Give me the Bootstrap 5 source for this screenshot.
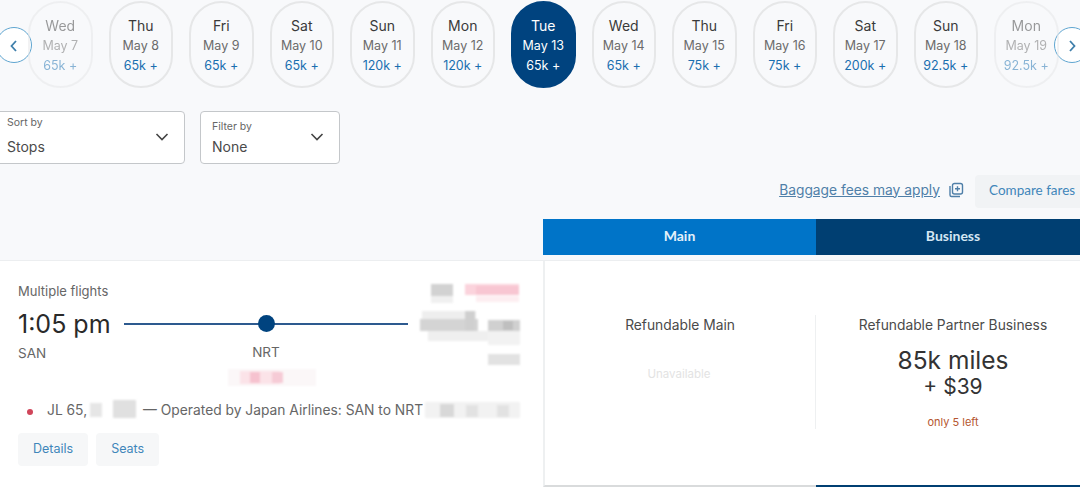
<!DOCTYPE html>
<html lang="en">
<head>
    <meta charset="UTF-8">
    <meta name="viewport" content="width=device-width, initial-scale=1.0">
    <title>Flight results</title>
    <link href="https://cdn.jsdelivr.net/npm/bootstrap@5.3.3/dist/css/bootstrap.min.css" rel="stylesheet">
    <style>
        html, body { height: 487px; overflow: hidden; }
        body {
            background-color: #f8f9fb;
            color: #2e2e2e;
            font-family: "Inter", "Liberation Sans", sans-serif;
            font-size: 13px;
            width: 1080px;
        }

        /* Date strip */
        .date-strip { height: 89px; padding: 1px 0 0 28px; gap: 16px; position: relative; }
        .date-pill {
            flex: 0 0 64.5px;
            height: 87px;
            border: 2px solid #e6e7e8;
            border-radius: 33px;
            text-align: center;
            padding-top: 13px;
            color: #6b6b6b;
            line-height: 19.5px;
            font-size: 12.5px;
            white-space: nowrap;
        }
        .date-pill b { display: block; font-weight: 400; font-size: 14px; color: #3a3a3a; }
        .date-pill i { display: block; font-style: normal; color: #1a6fb0; margin-top: 1px; }
        .date-pill.is-faded { opacity: .5; }
        .date-pill.is-active { background-color: #00437f; border-color: #00437f; color: #fff; }
        .date-pill.is-active b, .date-pill.is-active i { color: #fff; }
        .date-arrow {
            position: absolute;
            top: 27px;
            width: 36px;
            height: 36px;
            border: 1.5px solid #5fa5d0;
            border-radius: 50%;
            background-color: #fff;
        }
        .date-arrow.is-prev { left: -4px; }
        .date-arrow.is-next { left: 1054px; }

        /* Sort and filter */
        .picker-row { margin: 22px 0 0 -5px; gap: 15px; }
        .picker {
            height: 53px;
            background-color: #fff;
            border: 1px solid #c4c7ca;
            border-radius: 4px;
            position: relative;
            padding-left: 11px;
            color: #4a4a4a;
        }
        .picker.is-sort { width: 190px; padding-top: 4px; }
        .picker.is-filter { width: 140px; padding-top: 8px; }
        .picker-label { font-size: 10.5px; line-height: 14px; color: #666; }
        .picker-value { font-size: 14px; line-height: 20px; }
        .picker.is-sort .picker-value { margin-top: 7px; }
        .picker.is-filter .picker-value { margin-top: 3px; }
        .picker svg { position: absolute; top: 20px; right: 15px; }

        /* Link row */
        .link-row { margin-top: 11px; height: 33px; }
        .bag-link { color: #4f7fa8; text-decoration: underline; font-size: 13.8px; margin-bottom: 3px; }
        .bag-icon { margin-bottom: 4px; }
        .compare-btn {
            background-color: #f1f3f5;
            color: #3f86ba;
            height: 33px;
            width: 115px;
            margin-left: 11px;
            border-radius: 4px;
            padding: 0 0 3px 14px;
            font-size: 13.5px;
            font-family: "Lato", sans-serif;
            text-align: left;
            border: 0;
            margin-right: -10px;
        }

        /* Fare tabs */
        .fare-tabs { margin: 11px 0 0 543px; height: 36px; font-family: "Lato", sans-serif; font-weight: 700; font-size: 14px; color: #d4e6f3; }
        .fare-tabs > div { line-height: 34px; text-align: center; flex: none; }
        .tab-main { width: 273px; background-color: #0074c8; color: #e4f1fa; }
        .tab-business { width: 274px; background-color: #003f72; }

        /* Result */
        .result-row { margin-top: 5px; height: 227px; background-color: #fff; border-top: 1px solid #eceef0; }
        .flight-info { flex: none; width: 543px; padding: 21px 18px 0; position: relative; }
        .fare-area { flex: none; width: 547px; border-left: 2px solid #eef0f1; border-bottom: 2px solid #d9dbdc; padding-top: 54px; position: relative; }
        .fare-area::after { content: ""; position: absolute; left: 271px; right: 0; bottom: -2px; height: 2px; background-color: #003f72; }
        .muted-text { color: #666; line-height: 18px; }
        .time-row { margin-top: 9px; }
        .flight-time { font-size: 25px; line-height: 30px; color: #2a2a2a; width: 106px; flex: none; }
        .route-line { width: 284px; height: 2px; background-color: #2d5a8f; position: relative; }
        .route-line span { position: absolute; left: 134px; top: -8px; width: 17px; height: 17px; background-color: #00437f; border-radius: 50%; }
        .code-row { font-size: 13.5px; color: #666; margin-top: 4px; line-height: 20px; position: relative; }
        .code-row span:last-child { position: absolute; left: 234px; width: 28px; text-align: center; top: -1px; }
        .blur-layer { position: absolute; left: 0; top: 0; }
        .operator-row { position: absolute; left: 47px; top: 140px; font-size: 13.8px; color: #666; line-height: 18px; white-space: nowrap; }
        .flight-gap { display: inline-block; width: 56px; }
        .airline-dot { position: absolute; left: 27px; top: 148px; width: 6px; height: 6px; border-radius: 50%; background-color: #d0455a; }
        .action-row { position: absolute; left: 18px; top: 172px; gap: 8px; }
        .action-btn {
            background-color: #f6f7f8;
            color: #3f86ba;
            height: 33px;
            border: 0;
            border-radius: 4px;
            font-size: 12.5px;
            padding: 0 15px;
        }
        .fare-col { text-align: center; height: 114px; }
        .fare-col.is-left { width: 271px; border-right: 1px solid #eef0f1; }
        .fare-col.is-right { width: 274px; }
        .fare-name { font-size: 13.8px; line-height: 20px; color: #4a4a4a; }
        .fare-none { font-size: 11.5px; color: #e3e3e3; margin-top: 31px; padding-right: 2px; }
        .fare-miles { font-size: 24.5px; line-height: 28px; margin-top: 11px; color: #333; }
        .fare-cash { font-size: 21px; line-height: 24px; margin-top: 1px; color: #333; }
        .fare-left { font-size: 11px; color: #b5562f; margin-top: 15px; }
    </style>
</head>
<body>
    <div class="date-strip d-flex" id="dates">
        <button class="date-arrow is-prev p-0" aria-label="Previous">
            <svg width="12" height="14" viewBox="0 0 12 14"><path d="M8 2 3.5 7 8 12" fill="none" stroke="#3f7fab" stroke-width="1.8"/></svg>
        </button>
        <button class="date-arrow is-next p-0" aria-label="Next">
            <svg width="12" height="14" viewBox="0 0 12 14"><path d="M4 2l4.5 5L4 12" fill="none" stroke="#3f7fab" stroke-width="1.8"/></svg>
        </button>
    </div>

    <div class="picker-row d-flex">
        <div class="picker is-sort">
            <div class="picker-label">Sort by</div>
            <div class="picker-value">Stops</div>
            <svg width="14" height="10" viewBox="0 0 14 10"><path d="M1.500 2 7 7.500 12.500 2" fill="none" stroke="#444" stroke-width="1.6"/></svg>
        </div>
        <div class="picker is-filter">
            <div class="picker-label">Filter by</div>
            <div class="picker-value">None</div>
            <svg width="14" height="10" viewBox="0 0 14 10"><path d="M1.500 2 7 7.500 12.500 2" fill="none" stroke="#444" stroke-width="1.6"/></svg>
        </div>
    </div>

    <div class="link-row d-flex justify-content-end align-items-center">
        <a class="bag-link" href="#">Baggage fees may apply</a>
        <svg class="bag-icon ms-2" width="16" height="16" viewBox="0 0 16 16" fill="none" stroke="#4f7fa8" stroke-width="1.4">
            <path d="M2 4v9a1.500 1.500 0 0 0 1.500 1.500H12"/>
            <rect x="4.500" y="1.500" width="10" height="10.500" rx="2"/>
            <path d="M9.500 4.200v5M7 6.700h5"/>
        </svg>
        <button class="compare-btn">Compare fares</button>
    </div>

    <div class="fare-tabs d-flex">
        <div class="tab-main">Main</div>
        <div class="tab-business">Business</div>
    </div>

    <div class="result-row d-flex">
        <div class="flight-info">
            <div class="muted-text">Multiple flights</div>
            <div class="time-row d-flex align-items-center">
                <div class="flight-time">1:05 pm</div>
                <div class="route-line"><span></span></div>
            </div>
            <div class="code-row"><span>SAN</span><span>NRT</span></div>

            <span class="airline-dot"></span>
            <div class="operator-row">JL 65,<span class="flight-gap"></span>— Operated by Japan Airlines: SAN to NRT</div>

            <!-- blurred-out parts of the screenshot -->
            <svg class="blur-layer" width="543" height="170" viewBox="0 0 543 170">
                <defs><filter id="soft"><feGaussianBlur stdDeviation="1.2"/></filter></defs>
                <g filter="url(#soft)">
                    <rect x="431" y="23" width="22" height="12" fill="#d2d2d2"/>
                    <rect x="431" y="35" width="22" height="7" fill="#f0f0f0"/>
                    <rect x="465" y="23" width="54" height="11" fill="#fbd3dc"/>
                    <rect x="476" y="25" width="43" height="9" fill="#f8c6d2"/>
                    <rect x="476" y="35" width="43" height="6" fill="#fdeef1"/>
                    <rect x="422" y="50" width="54" height="10" fill="#eeeeee"/>
                    <rect x="420" y="58" width="58" height="12" fill="#d4d4d4"/>
                    <rect x="428" y="70" width="72" height="10" fill="#efefef"/>
                    <rect x="465" y="50" width="10" height="20" fill="#cfcfcf"/>
                    <rect x="488" y="59" width="32" height="11" fill="#d0d0d0"/>
                    <rect x="503" y="60" width="10" height="9" fill="#bfbfbf"/>
                    <rect x="488" y="70" width="32" height="14" fill="#f2f2f2"/>
                    <rect x="488" y="93" width="32" height="11" fill="#e2e2e2"/>
                    <rect x="228" y="108" width="88" height="17" fill="#fbf7f8"/>
                    <rect x="240" y="110" width="40" height="13" fill="#fbe3e8"/>
                    <rect x="250" y="111" width="10" height="11" fill="#f6c2cf"/>
                    <rect x="272" y="111" width="11" height="11" fill="#f6cbd6"/>
                    <rect x="90" y="142" width="12" height="14" fill="#e6e6e6"/>
                    <rect x="113" y="139" width="23" height="18" fill="#e0e0e0"/>
                    <rect x="425" y="141" width="95" height="16" fill="#f2f2f2"/>
                    <rect x="440" y="143" width="14" height="13" fill="#d8d8d8"/>
                    <rect x="466" y="144" width="12" height="12" fill="#e2e2e2"/>
                    <rect x="497" y="144" width="12" height="12" fill="#e2e2e2"/>
                </g>
            </svg>

            <div class="action-row d-flex">
                <button class="action-btn">Details</button>
                <button class="action-btn">Seats</button>
            </div>
        </div>
        <div class="fare-area d-flex">
            <div class="fare-col is-left">
                <div class="fare-name">Refundable Main</div>
                <div class="fare-none">Unavailable</div>
            </div>
            <div class="fare-col is-right">
                <div class="fare-name">Refundable Partner Business</div>
                <div class="fare-miles">85k miles</div>
                <div class="fare-cash">+ $39</div>
                <div class="fare-left">only 5 left</div>
            </div>
        </div>
    </div>

    <script src="https://cdn.jsdelivr.net/npm/bootstrap@5.3.3/dist/js/bootstrap.bundle.min.js"></script>
    <script>
        var dias = [
            ['Wed', 'May 7', '65k +', 'is-faded'], ['Thu', 'May 8', '65k +'], ['Fri', 'May 9', '65k +'],
            ['Sat', 'May 10', '65k +'], ['Sun', 'May 11', '120k +'], ['Mon', 'May 12', '120k +'],
            ['Tue', 'May 13', '65k +', 'is-active'], ['Wed', 'May 14', '65k +'], ['Thu', 'May 15', '75k +'],
            ['Fri', 'May 16', '75k +'], ['Sat', 'May 17', '200k +'], ['Sun', 'May 18', '92.5k +'],
            ['Mon', 'May 19', '92.5k +', 'is-faded']
        ];
        var strip = document.getElementById('dates');
        dias.forEach(function (d) {
            var pill = document.createElement('div');
            pill.className = 'date-pill ' + (d[3] || '');
            pill.innerHTML = '<b>' + d[0] + '</b>' + d[1] + '<i>' + d[2] + '</i>';
            strip.appendChild(pill);
        });
    </script>
</body>
</html>
